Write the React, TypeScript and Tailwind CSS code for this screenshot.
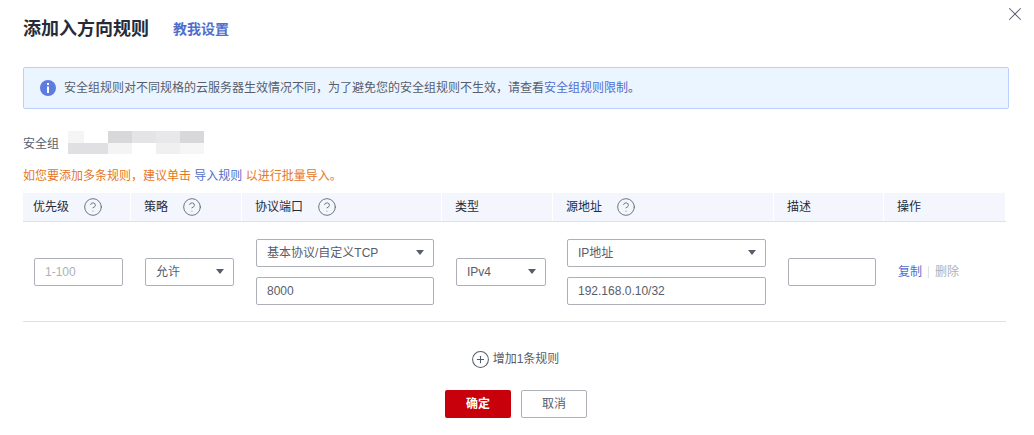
import { CircleHelp, CirclePlus, X } from 'lucide-react';

const blurCells = [
  { w: 'w-4', c: 'bg-[#f5f5f5]' },
  { w: 'w-6', c: 'bg-white' },
  { w: 'w-6', c: 'bg-[#d8d8db]' },
  { w: 'w-6', c: 'bg-[#e4e4e6]' },
  { w: 'w-6', c: 'bg-[#e8e8ea]' },
  { w: 'w-6', c: 'bg-[#d8d8da]' },
];

const blurCells2 = [
  { w: 'w-4', c: 'bg-[#e0e0e2]' },
  { w: 'w-6', c: 'bg-[#e0e0e2]' },
  { w: 'w-6', c: 'bg-[#f4f4f5]' },
  { w: 'w-6', c: 'bg-white' },
  { w: 'w-6', c: 'bg-[#f0f0f1]' },
  { w: 'w-6', c: 'bg-[#f6f6f6]' },
];

function HeadCell({ label, help, className }: { label: string; help?: boolean; className: string }) {
  return (
    <div className={`flex h-7 items-center border-r border-white bg-[#f3f6fd] text-[12px] text-[#252b3a] ${className}`}>
      <span>{label}</span>
      {help && <CircleHelp size={20} strokeWidth={1} className="ml-[14px] text-[#575d6c]" />}
    </div>
  );
}

function Select({ value, className }: { value: string; className: string }) {
  return (
    <div className={`flex h-7 items-center justify-between rounded-[2px] border border-[#adb0b8] pl-[10px] pr-[9px] text-[12px] text-[#575d6c] ${className}`}>
      <span>{value}</span>
      <span className="h-0 w-0 border-x-[4px] border-t-[5px] border-x-transparent border-t-[#575d6c]"></span>
    </div>
  );
}

function TextBox({ value, placeholder, className }: { value?: string; placeholder?: string; className: string }) {
  return (
    <input
      readOnly
      value={value ?? ''}
      placeholder={placeholder}
      className={`h-7 rounded-[2px] border border-[#adb0b8] px-[10px] text-[12px] text-[#575d6c] outline-none placeholder:text-[#adb0b8] ${className}`}
    />
  );
}

export default function App() {
  return (
    <div className="relative h-[435px] w-[1034px] overflow-hidden bg-white pl-[23px] pr-[25px] pt-[18px] font-['Liberation_Sans','Noto_Sans_CJK_SC',sans-serif] text-[12px] text-[#575d6c]">
      <button className="absolute right-2 top-[3px] text-[#575d6c]">
        <X size={22} strokeWidth={1.1} />
      </button>

      <div className="flex h-[22px] items-center">
        <h2 className="text-[18px] font-bold leading-[22px] text-[#252b3a]">添加入方向规则</h2>
        <a className="ml-6 text-[14px] font-bold text-[#526ecc]">教我设置</a>
      </div>

      {/* notice */}
      <div className="mt-[27px] flex h-[42px] items-center rounded-[2px] border border-[#bbd0ff] bg-[#ebf5ff] pl-4">
        <svg width="16" height="16" viewBox="0 0 16 16">
          <circle cx="8" cy="8" r="8" fill="#5e7ce0" />
          <rect x="7" y="3" width="2" height="2" fill="#fff" />
          <rect x="7" y="6.5" width="2" height="6.5" fill="#fff" />
        </svg>
        <p className="ml-[8px]">
          安全组规则对不同规格的云服务器生效情况不同，为了避免您的安全组规则不生效，请查看
          <a className="text-[#526ecc]">安全组规则限制</a>。
        </p>
      </div>

      <div className="mt-[22px] flex h-[23px] items-center">
        <span className="w-[45px] pt-[2px]">安全组</span>
        <div>
          <div className="flex h-3">
            {blurCells.map((b, i) => (
              <div key={i} className={`${b.w} ${b.c}`}></div>
            ))}
          </div>
          <div className="flex h-[11px]">
            {blurCells2.map((b, i) => (
              <div key={i} className={`${b.w} ${b.c}`}></div>
            ))}
          </div>
        </div>
      </div>

      <p className="mt-[14px] h-[16px] leading-[16px] text-[#e6771f]">
        如您要添加多条规则，建议单击 <a className="text-[#526ecc]">导入规则</a> 以进行批量导入。
      </p>

      {/* rules table */}
      <div className="mt-[9px] flex w-[983px] border-b border-[#dfe1e6]">
        <HeadCell label="优先级" help className="w-[108px] pl-[10px]" />
        <HeadCell label="策略" help className="w-[111px] pl-[13px]" />
        <HeadCell label="协议端口" help className="w-[200px] pl-[13px]" />
        <HeadCell label="类型" className="w-[111px] pl-[13px]" />
        <HeadCell label="源地址" help className="w-[221px] pl-[13px]" />
        <HeadCell label="描述" className="w-[110px] pl-[13px]" />
        <HeadCell label="操作" className="w-[122px] pl-[13px]" />
      </div>

      <div className="flex h-[100px] w-[983px] items-center border-b border-[#dfe1e6]">
        <div className="w-[108px] pl-[11px]">
          <TextBox placeholder="1-100" className="w-[89px]" />
        </div>
        <div className="w-[111px] pl-[14px]">
          <Select value="允许" className="w-[89px]" />
        </div>
        <div className="flex w-[200px] flex-col gap-[10px] pl-[14px]">
          <Select value="基本协议/自定义TCP" className="w-[178px]" />
          <TextBox value="8000" className="w-[178px]" />
        </div>
        <div className="w-[111px] pl-[14px]">
          <Select value="IPv4" className="w-[90px]" />
        </div>
        <div className="flex w-[221px] flex-col gap-[10px] pl-[14px]">
          <Select value="IP地址" className="w-[199px]" />
          <TextBox value="192.168.0.10/32" className="w-[199px]" />
        </div>
        <div className="w-[110px] pl-[14px]">
          <TextBox className="w-[88px]" />
        </div>
        <div className="flex items-center pl-[14px]">
          <a className="text-[#526ecc]">复制</a>
          <span className="mx-[6px] h-3 w-px bg-[#dfe1e6]"></span>
          <a className="text-[#adb0b8]">删除</a>
        </div>
      </div>

      <div className="mt-[28px] flex h-[18px] items-center justify-center pr-[2px]">
        <CirclePlus size={19} strokeWidth={1.3} className="text-[#575d6c]" />
        <span className="ml-[3px]">增加1条规则</span>
      </div>

      <div className="mt-[22px] flex justify-center gap-[10px]">
        <button className="h-7 w-[66px] rounded-[2px] bg-[#c7000b] text-[12px] font-bold text-white">确定</button>
        <button className="h-7 w-[66px] rounded-[2px] border border-[#adb0b8] bg-white text-[12px] text-[#575d6c]">取消</button>
      </div>
    </div>
  );
}
